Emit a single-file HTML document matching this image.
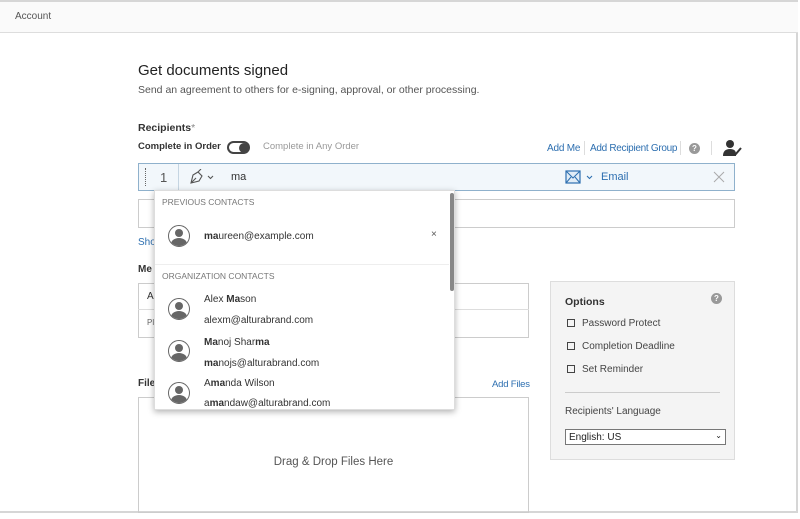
<!DOCTYPE html>
<html><head><style>
*{box-sizing:border-box;margin:0;padding:0}
body{width:800px;height:519px;background:#fff;font-family:"Liberation Sans",sans-serif;color:#333;position:relative;overflow:hidden}
.a{position:absolute}
.lnk{color:#2d6fb0;font-size:10px}
.av{position:absolute;width:22px;height:22px;border-radius:50%;border:1.5px solid #666;overflow:hidden;background:#fff}
.av:before{content:"";position:absolute;left:6px;top:3px;width:8px;height:8px;border-radius:50%;background:#666}
.av:after{content:"";position:absolute;left:2px;top:12px;width:16px;height:12px;border-radius:50%;background:#666}
.cb{position:absolute;width:8px;height:8px;border:1.3px solid #444}
</style></head><body>
<div class="a" style="left:0;top:0;width:798px;height:513px;border-right:2px solid #d6d6d6;border-bottom:2px solid #d6d6d6"></div>
<div class="a" style="left:0;top:0;width:798px;height:33px;background:#fafafa;border-bottom:1px solid #ddd;border-top:2px solid #d6d6d6"></div>
<div class="a" style="left:15px;top:11px;font-size:10px;color:#555">Account</div>
<div class="a" style="left:138px;top:62px;font-size:15px;color:#222">Get documents signed</div>
<div class="a" style="left:138px;top:84px;font-size:10.5px;color:#555">Send an agreement to others for e-signing, approval, or other processing.</div>
<div class="a" style="left:138px;top:122px;font-size:10.5px;font-weight:bold;color:#333">Recipients<span style="color:#888;font-weight:normal">*</span></div>
<div class="a" style="left:138px;top:141px;font-size:9.5px;font-weight:bold;color:#333">Complete in Order</div>
<div class="a" style="left:227px;top:141px;width:23px;height:13px;border-radius:7px;border:2px solid #444;background:#fff"></div>
<div class="a" style="left:239px;top:143px;width:10px;height:10px;border-radius:5px;background:#444"></div>
<div class="a" style="left:263px;top:141px;font-size:9.5px;color:#999">Complete in Any Order</div>
<div class="a lnk" style="left:547px;top:143px;letter-spacing:-0.2px">Add Me</div>
<div class="a" style="left:584px;top:141px;width:1px;height:14px;background:#ddd"></div>
<div class="a lnk" style="left:590px;top:143px;letter-spacing:-0.3px">Add Recipient Group</div>
<div class="a" style="left:680px;top:141px;width:1px;height:14px;background:#ddd"></div>
<div class="a" style="left:689px;top:143px;width:11px;height:11px;border-radius:50%;background:#999;color:#fff;font-size:8px;text-align:center;line-height:11px;font-weight:bold">?</div>
<div class="a" style="left:711px;top:141px;width:1px;height:14px;background:#ddd"></div>
<svg class="a" style="left:722px;top:139px" width="20" height="18"><circle cx="8" cy="5" r="4" fill="#333"/><path d="M1 17 Q1 10 8 10 Q14 10 14 15 L14 17Z" fill="#333"/><path d="M13 16 L19 9" stroke="#333" stroke-width="2"/></svg>
<div class="a" style="left:138px;top:163px;width:597px;height:28px;background:#f2f7fb;border:1px solid #8fb1cc"></div>
<div class="a" style="left:145px;top:168px;height:18px;border-left:1px dotted #666"></div>
<div class="a" style="left:160px;top:170px;font-size:13px;color:#555">1</div>
<div class="a" style="left:178px;top:164px;width:1px;height:26px;background:#c5d5e2"></div>
<svg class="a" style="left:189px;top:169px" width="28" height="16"><path d="M2 14 L4 6 L9 3 L13 7 L10 12 Z M2 14 L7 9 M9 3 L12 0" stroke="#555" fill="none" stroke-width="1.1"/><path d="M19 7 L21.5 9.5 L24 7" stroke="#555" fill="none" stroke-width="1.1"/></svg>
<div class="a" style="left:231px;top:171px;font-size:11px;color:#333">ma</div>
<svg class="a" style="left:565px;top:170px" width="32" height="14"><rect x="1" y="1" width="14" height="12" fill="#e0ecf6" stroke="#2d6fb0" stroke-width="1.2"/><path d="M1 1 L8 8 L15 1 M1 13 L6 7 M15 13 L10 7" stroke="#2d6fb0" fill="none"/><path d="M22 6 L24.5 8.5 L27 6" stroke="#2d6fb0" fill="none" stroke-width="1.1"/></svg>
<div class="a" style="left:601px;top:171px;font-size:11px;color:#2d6fb0">Email</div>
<svg class="a" style="left:713px;top:171px" width="12" height="12"><path d="M1 1L11 11M11 1L1 11" stroke="#aaa" stroke-width="1"/></svg>
<div class="a" style="left:138px;top:199px;width:597px;height:29px;border:1px solid #ccc"></div>
<div class="a lnk" style="left:138px;top:237px">Sho</div>
<div class="a" style="left:138px;top:264px;font-size:10px;font-weight:bold">Me</div>
<div class="a" style="left:138px;top:283px;width:391px;height:55px;border:1px solid #ccc"></div>
<div class="a" style="left:138px;top:309px;width:391px;height:1px;background:#ddd"></div>
<div class="a" style="left:147px;top:291px;font-size:10px">A</div>
<div class="a" style="left:147px;top:318px;font-size:8px;color:#666">Pl</div>
<div class="a" style="left:138px;top:378px;font-size:10px;font-weight:bold">File</div>
<div class="a lnk" style="left:492px;top:379px;font-size:9.5px;letter-spacing:-0.2px">Add Files</div>
<div class="a" style="left:138px;top:397px;width:391px;height:116px;border:1px solid #ccc"></div>
<div class="a" style="left:138px;top:456px;width:391px;text-align:center;font-size:11.5px;color:#555">Drag &amp; Drop Files Here</div>
<div class="a" style="left:550px;top:281px;width:185px;height:179px;background:#f4f4f4;border:1px solid #ddd"></div>
<div class="a" style="left:565px;top:296px;font-size:10.5px;font-weight:bold">Options</div>
<div class="a" style="left:711px;top:293px;width:11px;height:11px;border-radius:50%;background:#999;color:#fff;font-size:8px;text-align:center;line-height:11px;font-weight:bold">?</div>
<div class="cb" style="left:567px;top:319px"></div><div class="a" style="left:582px;top:318px;font-size:10px;color:#444">Password Protect</div>
<div class="cb" style="left:567px;top:342px"></div><div class="a" style="left:582px;top:341px;font-size:10px;color:#444">Completion Deadline</div>
<div class="cb" style="left:567px;top:365px"></div><div class="a" style="left:582px;top:364px;font-size:10px;color:#444">Set Reminder</div>
<div class="a" style="left:565px;top:392px;width:155px;height:1px;background:#ccc"></div>
<div class="a" style="left:565px;top:406px;font-size:10px;color:#444">Recipients' Language</div>
<div class="a" style="left:565px;top:429px;width:161px;height:16px;background:#fff;border:1px solid #777;font-size:10px;padding:2px 3px;color:#222">English: US<span style="position:absolute;right:3px;top:1px;font-size:8px">&#8964;</span></div>
<div class="a" style="left:154px;top:190px;width:301px;height:220px;background:#fff;box-shadow:0 2px 6px rgba(0,0,0,.3);border:1px solid #ddd;overflow:hidden">
<div class="a" style="left:295px;top:2px;width:4px;height:98px;background:#888;border-radius:2px"></div>
<div class="a" style="left:7px;top:6px;font-size:8.5px;color:#777">PREVIOUS CONTACTS</div>
<div class="av" style="left:13px;top:34px"></div>
<div class="a" style="left:49px;top:40px;font-size:10px"><b>ma</b>ureen@example.com</div>
<div class="a" style="left:276px;top:38px;font-size:10px;color:#555">×</div>
<div class="a" style="left:0;top:73px;width:294px;height:1px;background:#eee"></div>
<div class="a" style="left:7px;top:80px;font-size:8.5px;color:#777">ORGANIZATION CONTACTS</div>
<div class="av" style="left:13px;top:107px"></div>
<div class="a" style="left:49px;top:103px;font-size:10px">Alex <b>Ma</b>son</div>
<div class="a" style="left:49px;top:124px;font-size:10px">alexm@alturabrand.com</div>
<div class="av" style="left:13px;top:149px"></div>
<div class="a" style="left:49px;top:146px;font-size:10px"><b>Ma</b>noj Shar<b>ma</b></div>
<div class="a" style="left:49px;top:167px;font-size:10px"><b>ma</b>nojs@alturabrand.com</div>
<div class="av" style="left:13px;top:191px"></div>
<div class="a" style="left:49px;top:187px;font-size:10px">A<b>ma</b>nda Wilson</div>
<div class="a" style="left:49px;top:207px;font-size:10px">a<b>ma</b>ndaw@alturabrand.com</div>
</div>
</body></html>
